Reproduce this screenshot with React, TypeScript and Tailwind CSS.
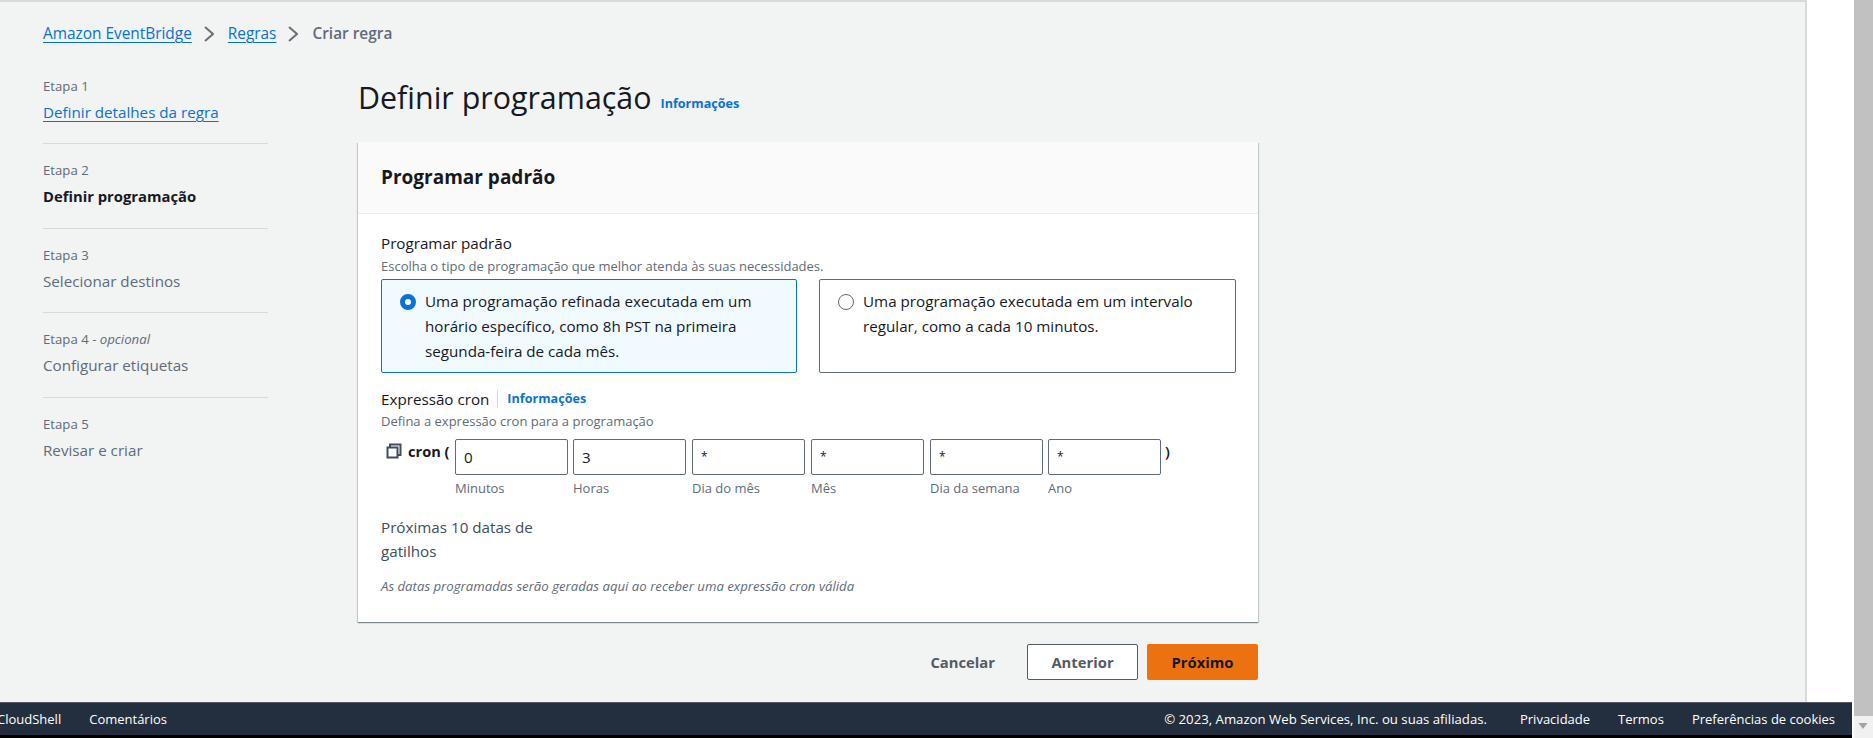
const font = "font-['Open_Sans','Noto_Sans',sans-serif]"

const steps = [
  { label: 'Etapa 1', title: 'Definir detalhes da regra', kind: 'link' },
  { label: 'Etapa 2', title: 'Definir programação', kind: 'active' },
  { label: 'Etapa 3', title: 'Selecionar destinos', kind: 'off' },
  { label: 'Etapa 4', optional: 'opcional', title: 'Configurar etiquetas', kind: 'off' },
  { label: 'Etapa 5', title: 'Revisar e criar', kind: 'off' },
]

const cronFields = [
  { value: '0', label: 'Minutos', mr: 'mr-[5px]' },
  { value: '3', label: 'Horas', mr: 'mr-[6px]' },
  { value: '*', label: 'Dia do mês', mr: 'mr-[6px]' },
  { value: '*', label: 'Mês', mr: 'mr-[6px]' },
  { value: '*', label: 'Dia da semana', mr: 'mr-[5px]' },
  { value: '*', label: 'Ano', mr: 'mr-[4px]' },
]

function Chevron() {
  return (
    <svg width="10" height="16" viewBox="0 0 10 16" fill="none" stroke="#687078" strokeWidth="2" className="ml-[12px] mr-[14px]">
      <path d="M1 1l8 7-8 7" />
    </svg>
  )
}

function CopyIcon() {
  return (
    <svg width="16" height="16" viewBox="0 0 16 16" fill="none" stroke="#414d5c" strokeWidth="2">
      <path d="M4 4V1.5h10.5V12H12" />
      <rect x="1.5" y="4.5" width="10" height="10" />
    </svg>
  )
}

function App() {
  return (
    <div className={`flex h-[738px] w-[1873px] overflow-hidden bg-white text-[15.2px] text-[#16191f] ${font}`}>
      <div className="flex w-[1852px] flex-col">
        <div className="flex h-[702px] overflow-hidden">
          {/* Page */}
          <div className="h-full w-[1807px] border-t-2 border-r-2 border-[#d5dbdb] bg-[#f2f3f3] pl-[43px]">
            {/* Breadcrumb */}
            <div className="mt-[21px] flex h-[22px] items-center text-[15.4px] leading-[22px]">
              <a className="text-[#0972d3] underline underline-offset-3">Amazon EventBridge</a>
              <Chevron />
              <a className="text-[#0972d3] underline underline-offset-3">Regras</a>
              <Chevron />
              <span className="font-semibold text-[#5f6b7a]">Criar regra</span>
            </div>

            <div className="mt-[20px] flex">
              {/* Steps */}
              <div className="w-[225px] shrink-0">
                {steps.map((s, i) => (
                  <div key={s.label} className={`mb-[5px] h-[79.4px] ${i < 4 ? 'border-b border-[#d5dbdb]' : ''}`}>
                    <div className="pt-[12px] text-[13.2px] leading-[18px] text-[#5f6b7a]">
                      {s.label}
                      {s.optional && <span> - <i>{s.optional}</i></span>}
                    </div>
                    <div className="mt-[6px] leading-[22px]">
                      {s.kind === 'link' && <a className="text-[#0972d3] underline underline-offset-3">{s.title}</a>}
                      {s.kind === 'active' && <span className="text-[14.8px] font-bold text-[#16191f]">{s.title}</span>}
                      {s.kind === 'off' && <span className="text-[#5f6b7a]">{s.title}</span>}
                    </div>
                  </div>
                ))}
              </div>

              {/* Main */}
              <div className="ml-[90px] w-[900px]">
                <div className="flex h-[77px] items-start">
                  <h1 className="mt-[15px] text-[30.4px] leading-[36px] text-[#16191f]">Definir programação</h1>
                  <a className="ml-[9px] mt-[28px] text-[12.6px] font-bold leading-[22px] text-[#0972d3]">Informações</a>
                </div>

                {/* Card */}
                <div className="h-[480px] bg-white shadow-[0_1px_1px_0_rgba(0,28,36,0.3),1px_1px_1px_0_rgba(0,28,36,0.15),-1px_1px_1px_0_rgba(0,28,36,0.15)]">
                  <div className="flex h-[72px] items-center border-b border-[#eaeded] bg-[#fafafa] pb-[2px] pl-[23px]">
                    <h2 className="text-[19px] font-bold leading-[22px]">Programar padrão</h2>
                  </div>
                  <div className="pl-[23px] pt-[18px]">
                    <div className="leading-[22px]">Programar padrão</div>
                    <div className="mt-[3px] text-[13px] leading-[18px] text-[#5f6b7a]">Escolha o tipo de programação que melhor atenda às suas necessidades.</div>

                    <div className="mt-[4px] flex gap-[22px]">
                      <div className="flex h-[94px] w-[416px] rounded-[2px] border border-[#0972d3] bg-[#f1faff] pl-[18px] pr-[30px] pt-[9px] leading-[25px]">
                        <span className="mr-[9px] mt-[5px] h-[16px] w-[16px] shrink-0 rounded-full border-[5px] border-[#0972d3] bg-white" />
                        <span>Uma programação refinada executada em um horário específico, como 8h PST na primeira segunda-feira de cada mês.</span>
                      </div>
                      <div className="flex h-[94px] w-[417px] rounded-[2px] border border-[#5f6b7a] bg-white pl-[18px] pr-[30px] pt-[9px] leading-[25px]">
                        <span className="mr-[9px] mt-[5px] h-[16px] w-[16px] shrink-0 rounded-full border border-[#5f6b7a] bg-white" />
                        <span>Uma programação executada em um intervalo regular, como a cada 10 minutos.</span>
                      </div>
                    </div>

                    <div className="mt-[15px] flex h-[22px] items-center leading-[22px]">
                      <span>Expressão cron</span>
                      <span className="ml-[8px] h-[18px] w-px bg-[#d5dbdb]" />
                      <a className="ml-[9px] text-[12.6px] font-bold text-[#0972d3]">Informações</a>
                    </div>
                    <div className="mt-[2px] text-[13px] leading-[18px] text-[#5f6b7a]">Defina a expressão cron para a programação</div>

                    {/* Cron fields */}
                    <div className="mt-[9px] flex items-start">
                      <div className="ml-[5px] mt-[3px] flex h-[18px] w-[69px] items-center">
                        <CopyIcon />
                        <span className="ml-[6px] text-[14.6px] font-bold leading-[18px]">cron (</span>
                      </div>
                      {cronFields.map((f) => (
                        <div key={f.label} className={`w-[113px] ${f.mr} shrink-0`}>
                          <div className={`flex h-[36px] items-center rounded-[2px] border border-[#5f6b7a] bg-white pl-[8px] leading-[22px] ${f.value === '*' ? 'text-[12px]' : ''}`}>{f.value}</div>
                          <div className="mt-[4px] text-[13px] leading-[18px] text-[#5f6b7a]">{f.label}</div>
                        </div>
                      ))}
                      <span className="mt-[1px] font-semibold leading-[22px]">)</span>
                    </div>

                    <div className="mt-[18px] w-[190px] leading-[24px] text-[#414d5c]">Próximas 10 datas de gatilhos</div>
                    <div className="mt-[14px] text-[13.2px] italic leading-[18px] text-[#5f6b7a]">As datas programadas serão geradas aqui ao receber uma expressão cron válida</div>
                  </div>
                </div>

                {/* Actions */}
                <div className="mt-[22px] flex items-center justify-end">
                  <button className="mr-[32px] text-[14.8px] font-bold leading-[22px] text-[#545b64]">Cancelar</button>
                  <button className="mr-[9px] h-[36px] w-[111px] rounded-[2px] border border-[#545b64] bg-white text-[14.8px] font-bold text-[#545b64]">Anterior</button>
                  <button className="h-[36px] w-[111px] rounded-[2px] bg-[#ec7211] text-[14.8px] font-bold text-[#16191f]">Próximo</button>
                </div>
              </div>
            </div>
          </div>
        </div>

        {/* Footer */}
        <div className="flex h-[33px] items-center overflow-hidden border-t border-[#545b64] bg-[#232f3e] pr-[17px] text-[13px] leading-[18px] text-white">
          <span className="ml-[-3px]">CloudShell</span>
          <span className="ml-[28px]">Comentários</span>
          <span className="ml-auto text-[13.2px]">© 2023, Amazon Web Services, Inc. ou suas afiliadas.</span>
          <span className="ml-[33px]">Privacidade</span>
          <span className="ml-[28px]">Termos</span>
          <span className="ml-[28px]">Preferências de cookies</span>
        </div>
        <div className="h-[3px] bg-black" />
      </div>

      {/* Browser scrollbar */}
      <div className="ml-[2px] flex h-full w-[19px] flex-col">
        <div className="flex-1 bg-[#c1c1c1]" />
        <div className="h-[22px] bg-[#f1f1f1]">
          <svg width="19" height="22" viewBox="0 0 19 22" className="block">
            <path d="M4.5 7h9l-4.5 6z" fill="#a3a3a3" />
          </svg>
        </div>
      </div>
    </div>
  )
}

export default App
